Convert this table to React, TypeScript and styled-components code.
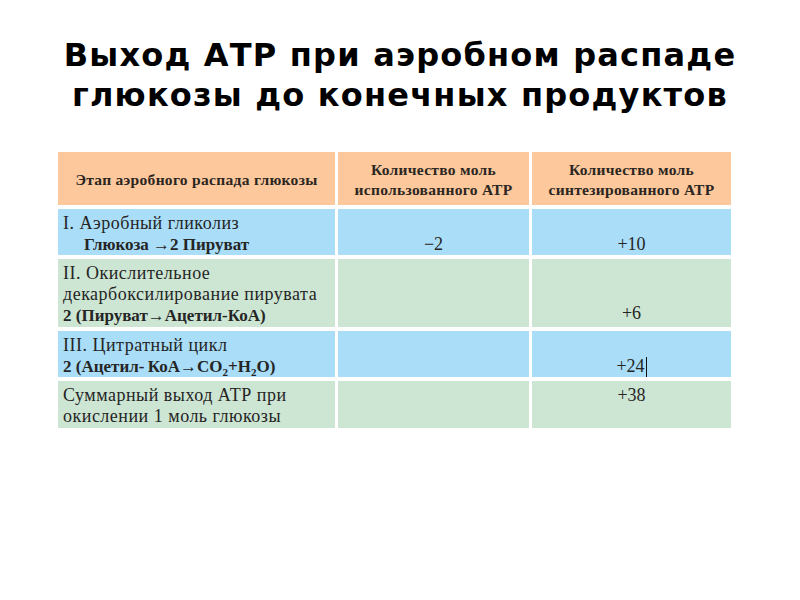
import styled, { createGlobalStyle } from "styled-components";

const GlobalStyle = createGlobalStyle`
  html, body {
    margin: 0;
    padding: 0;
    background: #ffffff;
  }
  body {
    width: 800px;
    height: 600px;
    overflow: hidden;
  }
`;

const Slide = styled.div`
  width: 800px;
  height: 600px;
  display: flex;
  flex-direction: column;
  padding-top: 35px;
  box-sizing: border-box;
`;

const Title = styled.h1`
  margin: 0;
  font-family: "DejaVu Sans", sans-serif;
  font-weight: bold;
  font-size: 32px;
  line-height: 40px;
  letter-spacing: 1.2px;
  text-align: center;
  color: #000;
`;

const Table = styled.div`
  margin: 37px 0 0 58px;
  display: grid;
  grid-template-columns: 277px 191px 199px;
  grid-template-rows: 53px 46px 68px 46px 47px;
  column-gap: 3px;
  row-gap: 4px;
  font-family: "Liberation Serif", "Times New Roman", serif;
  color: #252525;
`;

type Tone = "head" | "blue" | "green";

const tones: Record<Tone, string> = {
  head: "#fdc89b",
  blue: "#a9ddf8",
  green: "#cde5d3",
};

const Cell = styled.div<{ $tone: Tone; $align?: "top" | "bottom" | "center" }>`
  background: ${(p) => tones[p.$tone]};
  display: flex;
  flex-direction: column;
  justify-content: ${(p) =>
    p.$align === "bottom" ? "flex-end" : p.$align === "center" ? "center" : "flex-start"};
  box-sizing: border-box;
`;

const HeadText = styled.div`
  font-weight: bold;
  font-size: 15.5px;
  line-height: 20px;
  letter-spacing: 0.3px;
  text-align: center;
  color: #2b2622;
  padding-top: 2px;
`;

const StageText = styled.div`
  font-size: 18px;
  line-height: 21px;
  letter-spacing: 0.5px;
  padding: 4px 0 0 5px;
`;

const Line = styled.div<{ $bold?: boolean; $indent?: boolean }>`
  font-weight: ${(p) => (p.$bold ? "bold" : "normal")};
  font-size: ${(p) => (p.$bold ? "17px" : "18px")};
  letter-spacing: ${(p) => (p.$bold ? "0" : "0.5px")};
  padding-left: ${(p) => (p.$indent ? "21px" : "0")};
  white-space: nowrap;
`;

const Sub = styled.sub`
  font-size: 11px;
  line-height: 0;
`;

const Arrow = styled.span`
  font-weight: normal;
  font-size: 17px;
`;

const Value = styled.div<{ $pad?: string }>`
  font-size: 18px;
  line-height: 20px;
  text-align: center;
  padding: ${(p) => p.$pad ?? "0"};
`;

const Caret = styled.span`
  display: inline-block;
  width: 0;
  height: 20px;
  border-left: 1px solid #111;
  vertical-align: -5px;
  margin-left: 1px;
`;

export default function App() {
  return (
    <>
      <GlobalStyle />
      <Slide>
        <Title>
          Выход АТР при аэробном распаде
          <br />
          глюкозы до конечных продуктов
        </Title>
        <Table>
          <Cell $tone="head" $align="center">
            <HeadText>Этап аэробного распада глюкозы</HeadText>
          </Cell>
          <Cell $tone="head" $align="center">
            <HeadText>
              Количество моль
              <br />
              использованного АТР
            </HeadText>
          </Cell>
          <Cell $tone="head" $align="center">
            <HeadText>
              Количество моль
              <br />
              синтезированного АТР
            </HeadText>
          </Cell>

          <Cell $tone="blue">
            <StageText>
              <Line>I. Аэробный гликолиз</Line>
              <Line $bold $indent>
                Глюкоза <Arrow>→</Arrow>2 Пируват
              </Line>
            </StageText>
          </Cell>
          <Cell $tone="blue" $align="bottom">
            <Value $pad="0 0 1px">−2</Value>
          </Cell>
          <Cell $tone="blue" $align="bottom">
            <Value $pad="0 0 1px">+10</Value>
          </Cell>

          <Cell $tone="green">
            <StageText>
              <Line>II. Окислительное</Line>
              <Line>декарбоксилирование пирувата</Line>
              <Line $bold>
                2 (Пируват<Arrow>→</Arrow>Ацетил-КоА)
              </Line>
            </StageText>
          </Cell>
          <Cell $tone="green" />
          <Cell $tone="green" $align="bottom">
            <Value $pad="0 0 4px">+6</Value>
          </Cell>

          <Cell $tone="blue">
            <StageText>
              <Line>III. Цитратный цикл</Line>
              <Line $bold>
                2 (Ацетил-&thinsp;КоА<Arrow>→</Arrow>CO<Sub>2</Sub>+H<Sub>2</Sub>O)
              </Line>
            </StageText>
          </Cell>
          <Cell $tone="blue" />
          <Cell $tone="blue" $align="bottom">
            <Value>
              +24
              <Caret />
            </Value>
          </Cell>

          <Cell $tone="green">
            <StageText>
              <Line>Суммарный выход АТР при</Line>
              <Line>окислении 1 моль глюкозы</Line>
            </StageText>
          </Cell>
          <Cell $tone="green" />
          <Cell $tone="green">
            <Value $pad="4px 0 0">+38</Value>
          </Cell>
        </Table>
      </Slide>
    </>
  );
}
